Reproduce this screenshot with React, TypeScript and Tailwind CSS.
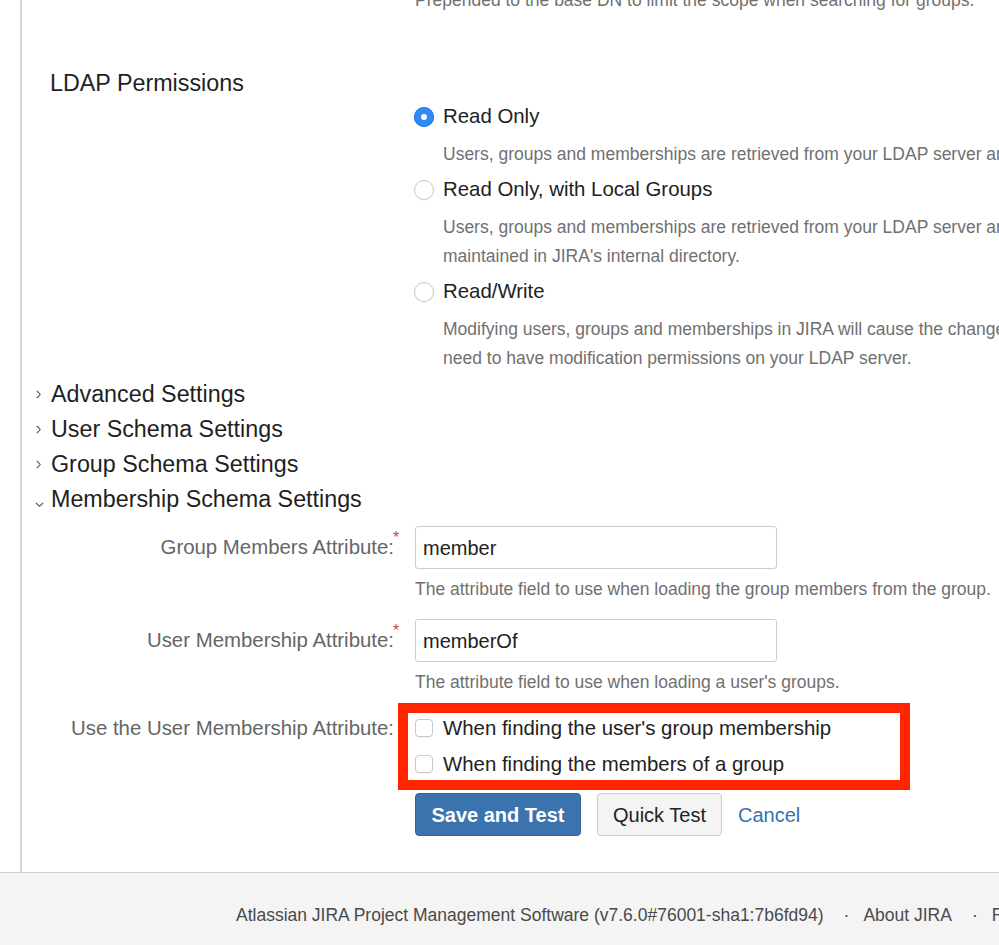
import React from "react";

const font = { fontFamily: '"Liberation Sans", Arial, Helvetica, sans-serif' };

function Radio({ checked }: { checked?: boolean }) {
  if (checked) {
    return (
      <span className="-ml-px flex h-[20px] w-[20px] shrink-0 items-center justify-center rounded-full bg-[#2f8af5] shadow-[inset_0_0_0_1px_#2a7de0]">
        <span className="h-[6px] w-[6px] rounded-full bg-white" />
      </span>
    );
  }
  return (
    <span className="-ml-px h-[20px] w-[20px] shrink-0 rounded-full border border-[#c9c9c9] bg-white shadow-[0_1px_1px_rgba(0,0,0,0.06)]" />
  );
}

function Checkbox() {
  return (
    <span className="h-[18px] w-[18px] shrink-0 rounded-[4px] border border-[#c9c9c9] bg-white shadow-[0_1px_1px_rgba(0,0,0,0.05)]" />
  );
}

function ChevronRight() {
  return (
    <svg width="5" height="9" viewBox="0 0 5 9" fill="none">
      <path d="M0.8 0.8 L4.2 4.5 L0.8 8.2" stroke="#555" strokeWidth="1.1" />
    </svg>
  );
}

function ChevronDown() {
  return (
    <svg width="9" height="5" viewBox="0 0 9 5" fill="none" className="-ml-[1px] mt-[10px]">
      <path d="M0.8 0.8 L4.5 4.2 L8.2 0.8" stroke="#555" strokeWidth="1.1" />
    </svg>
  );
}

const permissions = [
  {
    label: "Read Only",
    checked: true,
    lines: [
      "Users, groups and memberships are retrieved from your LDAP server and cannot be modified.",
    ],
  },
  {
    label: "Read Only, with Local Groups",
    lines: [
      "Users, groups and memberships are retrieved from your LDAP server and cannot be modified. Users can be added to groups",
      "maintained in JIRA's internal directory.",
    ],
  },
  {
    label: "Read/Write",
    lines: [
      "Modifying users, groups and memberships in JIRA will cause the changes to be applied directly to your LDAP server. Your configured LDAP user will",
      "need to have modification permissions on your LDAP server.",
    ],
  },
];

const sections = [
  { title: "Advanced Settings", open: false },
  { title: "User Schema Settings", open: false },
  { title: "Group Schema Settings", open: false },
  { title: "Membership Schema Settings", open: true },
];

function Field({ label, value, help, className }: { label: string; value: string; help: string; className?: string }) {
  return (
    <div className={`grid grid-cols-[393px_1fr] ${className ?? ""}`}>
      <div className="flex h-[43px] items-center justify-end pr-[21px] text-[20.4px] leading-[43px] text-[#666]">
        <span className="relative">
          {label}
          <span className="absolute left-full top-[2px] ml-[-1px] text-[16px] leading-[20px] text-[#d04437]">*</span>
        </span>
      </div>
      <div>
        <div className="flex h-[43px] w-[362px] items-center rounded-[3px] border border-[#cccccc] bg-white pl-[7px] text-[20px] text-[#222]">
          {value}
        </div>
        <p className="mt-[6px] whitespace-nowrap text-[17.5px] leading-[29px] text-[#707070]">{help}</p>
      </div>
    </div>
  );
}

export default function App() {
  return (
    <div className="flex h-[945px] w-full flex-col overflow-hidden bg-white" style={font}>
      <main className="ml-[20px] flex-1 border-l-2 border-[#d6d6d6]">
        <p className="-mt-[14px] whitespace-nowrap pl-[393px] text-[17.5px] leading-[29px] text-[#707070]">
          Prepended to the base DN to limit the scope when searching for groups.
        </p>

        <h3 className="mt-[54px] pl-[28px] text-[23.3px] font-normal leading-[28px] text-[#1f1f1f]">LDAP Permissions</h3>

        <div className="mt-[5px] flex flex-col gap-[6px] pl-[393px]">
          {permissions.map((p) => (
            <div key={p.label}>
              <label className="flex h-[29px] items-center gap-[9px] text-[20.4px] leading-[29px] text-[#222]">
                <Radio checked={p.checked} />
                <span>{p.label}</span>
              </label>
              <div className="mt-[9px] pl-[28px] text-[17.5px] leading-[29px] text-[#707070]">
                {p.lines.map((l) => (
                  <div key={l} className="whitespace-nowrap">
                    {l}
                  </div>
                ))}
              </div>
            </div>
          ))}
        </div>

        <div className="mt-[4px]">
          {sections.map((s) => (
            <div key={s.title} className="flex h-[35px] items-center pl-[14px] text-[23.3px] leading-[35px] text-[#1f1f1f]">
              <span className="flex w-[15px] items-center">{s.open ? <ChevronDown /> : <ChevronRight />}</span>
              <span>{s.title}</span>
            </div>
          ))}
        </div>

        <Field
          className="mt-[9px]"
          label="Group Members Attribute:"
          value="member"
          help="The attribute field to use when loading the group members from the group."
        />
        <Field
          className="mt-[15px]"
          label="User Membership Attribute:"
          value="memberOf"
          help="The attribute field to use when loading a user's groups."
        />

        <div className="mt-[13px] grid grid-cols-[393px_1fr]">
          <div className="pr-[21px] text-right text-[20.4px] leading-[36px] text-[#666]">Use the User Membership Attribute:</div>
          <div className="relative">
            <label className="flex h-[36px] items-center gap-[10px] text-[20.4px] text-[#222]">
              <Checkbox />
              <span>When finding the user's group membership</span>
            </label>
            <label className="flex h-[36px] items-center gap-[10px] text-[20.4px] text-[#222]">
              <Checkbox />
              <span>When finding the members of a group</span>
            </label>
            <div className="pointer-events-none absolute left-[-17px] top-[-7px] h-[87px] w-[512px] border-[10px] border-[#fe2500]" />
          </div>
        </div>

        <div className="mt-[11px] flex items-center pl-[393px]">
          <button className="h-[43px] w-[166px] rounded-[4px] border border-[#2f659e] bg-[#3b73af] text-[20px] font-bold text-white">
            Save and Test
          </button>
          <button className="ml-[16px] h-[43px] w-[125px] rounded-[4px] border border-[#cccccc] bg-[#f4f4f4] text-[20px] text-[#222]">
            Quick Test
          </button>
          <a className="ml-[16px] text-[20px] text-[#3572b0]" href="#">
            Cancel
          </a>
        </div>
      </main>

      <footer className="h-[73px] shrink-0 whitespace-nowrap border-t border-[#d2d2d2] bg-[#f4f4f4] pl-[236px] pt-[28px] text-[17.5px] leading-[29px] text-[#4a4a4a]">
        <span>Atlassian JIRA Project Management Software (v7.6.0#76001-sha1:7b6fd94)</span>
        <span className="ml-[20px] mr-[14px]">·</span>
        <span>About JIRA</span>
        <span className="ml-[20px] mr-[14px]">·</span>
        <span>Report a problem</span>
      </footer>
    </div>
  );
}
